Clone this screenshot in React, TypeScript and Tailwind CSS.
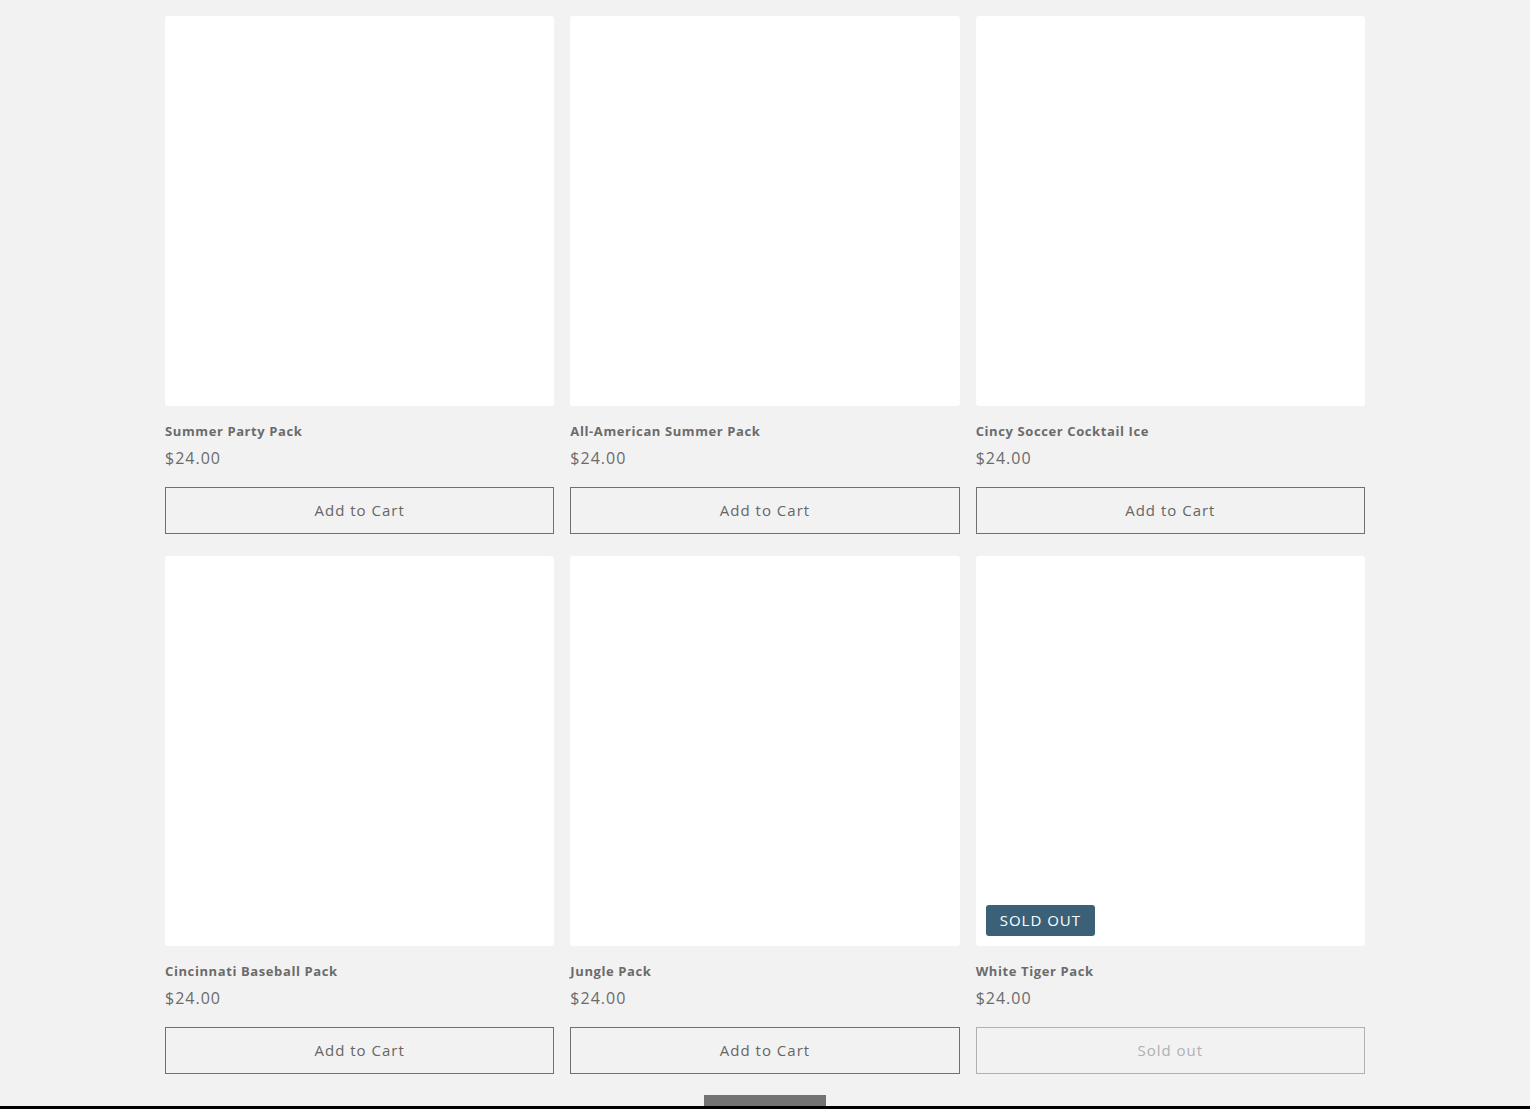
// Product grid – collection page

type Product = {
  name: string;
  price: string;
  soldOut?: boolean;
};

const products: Product[] = [
  { name: 'Summer Party Pack', price: '$24.00' },
  { name: 'All-American Summer Pack', price: '$24.00' },
  { name: 'Cincy Soccer Cocktail Ice', price: '$24.00' },
  { name: 'Cincinnati Baseball Pack', price: '$24.00' },
  { name: 'Jungle Pack', price: '$24.00' },
  { name: 'White Tiger Pack', price: '$24.00', soldOut: true },
];

function ProductCard({ product }: { product: Product }) {
  return (
    <div className="flex flex-col">
      {/* Image placeholder */}
      <div className="relative h-[390px] w-full rounded-[3px] bg-white">
        {product.soldOut && (
          <span className="absolute bottom-[10px] left-[10px] rounded-[3px] bg-[#3b6179] px-[14px] py-[5px] text-[15px] leading-[21px] tracking-[1px] text-white">
            SOLD OUT
          </span>
        )}
      </div>

      <h3 className="mt-[17px] text-[13px] font-bold leading-[16px] tracking-[0.6px] text-[#6b6b6b]">
        {product.name}
      </h3>
      <p className="mt-[7px] text-[16px] leading-[24px] tracking-[1px] text-[#6b6b6b]">
        {product.price}
      </p>

      {product.soldOut ? (
        <button
          disabled
          className="mt-[17px] h-[47px] w-full border border-[#b0b0b0] text-[15px] tracking-[1px] text-[#b0b0b0]"
        >
          Sold out
        </button>
      ) : (
        <button className="mt-[17px] h-[47px] w-full border border-[#707070] text-[15px] tracking-[1px] text-[#666666]">
          Add to Cart
        </button>
      )}
    </div>
  );
}

export default function App() {
  return (
    <div
      className="min-h-[1109px] bg-[#f2f2f2]"
      style={{ fontFamily: '"Open Sans", "Liberation Sans", sans-serif' }}
    >
      <div className="mx-auto w-[1200px] pt-4">
        <div className="grid grid-cols-3 gap-x-4 gap-y-[22px]">
          {products.map((p) => (
            <ProductCard key={p.name} product={p} />
          ))}
        </div>

        {/* Load more button (cut off at bottom) */}
        <div className="mt-[21px] flex justify-center">
          <div className="h-[11px] w-[122px] bg-[#737373]" />
        </div>
      </div>
      <div className="h-[3px] w-full bg-black" />
    </div>
  );
}
